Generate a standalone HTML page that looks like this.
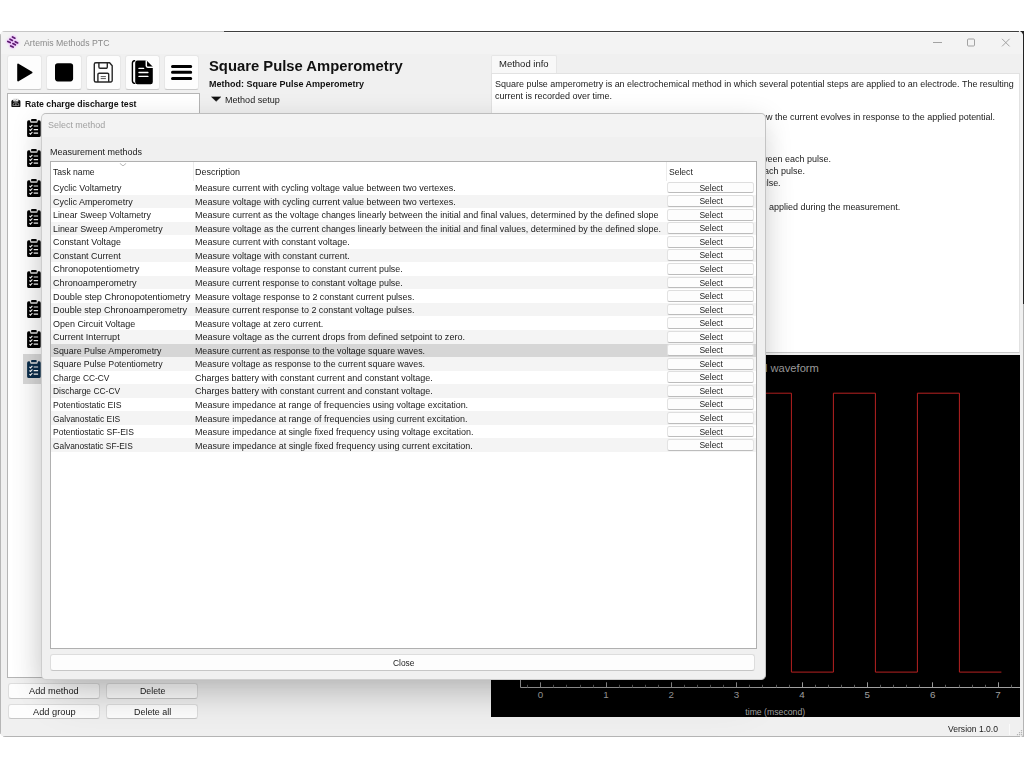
<!DOCTYPE html>
<html lang="en">
<head>
<meta charset="utf-8">
<title>Artemis Methods PTC</title>
<style>
html,body{margin:0;padding:0;}
body{width:1024px;height:768px;overflow:hidden;background:#fff;position:relative;
 font-family:"Liberation Sans",sans-serif;font-size:9.5px;color:#1a1a1a;}
.abs{position:absolute;}
.t{position:absolute;white-space:nowrap;line-height:12px;transform-origin:0 50%;}
#win{position:absolute;left:0;top:31px;width:1022.6px;height:706px;background:#f0f0f0;border-radius:5px 5px 3px 5px;overflow:hidden;}
#corner{position:absolute;left:1010px;top:31px;width:14px;height:273px;background:#222;}
#corner2{position:absolute;left:1010px;top:304px;width:13.6px;height:433px;background:#b4b4b4;}
.edge{position:absolute;pointer-events:none;}
/* all children of #win positioned in page coords via inner offset */
#in{position:absolute;left:0;top:-31px;width:1024px;height:768px;}
.tb{position:absolute;top:55.2px;width:35.4px;height:34.6px;background:#fdfdfd;border:1px solid #e7e7e7;border-bottom-color:#cacaca;border-radius:3px;box-sizing:border-box;}
.btn{position:absolute;background:#fdfdfd;border:1px solid #dddddd;border-bottom-color:#c6c6c6;border-radius:3px;box-sizing:border-box;text-align:center;}
#tree{position:absolute;left:6.8px;top:93.4px;width:193px;height:584.4px;background:#fff;border:1px solid #b5b5b5;box-sizing:border-box;}
.ci{position:absolute;left:27.1px;width:14px;height:18px;}
#dlg{position:absolute;left:41.4px;top:113.3px;width:724.4px;height:566.8px;background:#f0f0f0;border:1px solid #cdcdcd;border-top-color:#bdbdbd;border-right-color:#c4c4c4;border-radius:5px;box-sizing:border-box;
 box-shadow:-2px 8px 28px rgba(0,0,0,.17),0 28px 44px -14px rgba(0,0,0,.12);}
#tbl{position:absolute;left:50px;top:161px;width:707px;height:488px;background:#fff;border:1px solid #b0b0b0;box-sizing:border-box;overflow:hidden;}
.row{position:absolute;left:0;width:705px;height:13.55px;}
.row.alt{background:#f4f4f4;}
.row.sel{background:#d6d6d6;}
.row span{position:absolute;top:0.2px;line-height:13.55px;white-space:nowrap;transform-origin:0 50%;transform:scaleX(.945);}
.row .c1{left:1.5px;}
.row .hd{top:0.4px;}
.row .c1.hd{left:1.9px;transform:scaleX(.905);}
.row .c2{left:144.2px;}
.row .sb{position:absolute;left:616.3px;top:0.7px;width:87.2px;height:11.8px;background:#fdfdfd;border:1px solid #e3e3e3;border-top-color:#dedede;border-bottom-color:#bcbcbc;border-radius:2.5px;box-sizing:border-box;text-align:center;line-height:9.3px;}
.row .sb b{display:inline-block;font-weight:normal;transform:scaleX(.89);}
#info{position:absolute;left:491px;top:73px;width:528.5px;height:279.5px;background:#fff;border:1px solid #e2e2e2;border-bottom-color:#c8c8c8;box-sizing:border-box;}
#plot{position:absolute;left:491px;top:355px;width:529px;height:362.2px;background:#000;}
</style>
</head>
<body>
<div id="corner"></div><div id="corner2"></div>
<div id="win"><div id="in">
<div class="abs" style="left:0;top:31px;width:1024px;height:23.4px;background:#f3f3f3;"></div>

<!-- title bar -->
<svg class="abs" style="left:2px;top:32px;filter:drop-shadow(0 0 1px #e9a8ff) drop-shadow(0 0 1px #f0c4ff)" width="24" height="20" viewBox="0 0 24 20"><path d="M10.5 4.99L12.9 6.21 M8 7.19L10.4 8.41 M5.8 9.39L8.2 10.61 M13.25 9.69L15.65 10.91 M10.9 11.59L13.3 12.81 M8.7 13.89L11.1 15.11" stroke="#5b1b6e" stroke-width="1.7" stroke-linecap="round" fill="none"/></svg>
<div class="t" id="ttl" style="left:23.6px;top:36.8px;transform:scaleX(0.920);color:#8a8a8a;">Artemis Methods PTC</div>
<svg class="abs" style="left:928px;top:34px" width="90" height="18" viewBox="0 0 90 18" fill="none" stroke="#999" stroke-width=".9">
 <path d="M5 8.5h9"/><rect x="39.5" y="5" width="7" height="7" rx="1"/><path d="M74 4.8l7.6 7.6M81.6 4.8l-7.6 7.6"/>
</svg>

<!-- toolbar -->
<div class="tb" style="left:6.9px"></div>
<div class="tb" style="left:46.2px"></div>
<div class="tb" style="left:85.5px"></div>
<div class="tb" style="left:124.8px"></div>
<div class="tb" style="left:164.1px"></div>
<svg class="abs" style="left:8px;top:55px" width="190" height="34" viewBox="0 0 190 34">
 <path d="M10.1 9.4L23.6 17.45L10.1 25.5Z" fill="#000" stroke="#000" stroke-width="1.8" stroke-linejoin="round"/>
 <rect x="47" y="8.2" width="18.1" height="18.2" rx="2.8" fill="#000"/>
 <g fill="none" stroke="#262626" stroke-width="1.4" stroke-linejoin="round">
  <path d="M87.8 7.8h13.8l2.6 2.9v14.8a1.5 1.5 0 0 1-1.5 1.5h-14.9a1.5 1.5 0 0 1-1.5-1.5v-16.2a1.5 1.5 0 0 1 1.5-1.5z"/>
  <path d="M90.9 7.8v4.3a1.2 1.2 0 0 0 1.2 1.2h6a1.2 1.2 0 0 0 1.2-1.2v-4.3"/>
  <path d="M89.9 27v-7.6a1.2 1.2 0 0 1 1.2-1.2h8.4a1.2 1.2 0 0 1 1.2 1.2v7.6"/>
  <path d="M92.7 21.6h5.2M92.7 23.6h5.2" stroke-width="1" stroke="#555"/>
 </g>
 <path d="M126.6 5.7q-2.2 0.3-2.2 2.6v17.5q0 2.3 2.2 2.6" fill="none" stroke="#000" stroke-width="1.4" stroke-linecap="round"/>
 <path d="M129.4 5.6h9.2l6.2 6.2v15.2a2.2 2.2 0 0 1-2.2 2.2h-13.2a2.2 2.2 0 0 1-2.2-2.2v-19.2a2.2 2.2 0 0 1 2.2-2.2z" fill="#000"/>
 <path d="M138.3 5.2v5.6a1.4 1.4 0 0 0 1.4 1.4h5.5" fill="none" stroke="#fff" stroke-width="1.5"/>
 <path d="M131 13.4h4.6M131 17.5h8.9M131 21.4h8.9" stroke="#fff" stroke-width="1.4" stroke-linecap="round"/>
 <path d="M164.5 11.4h18.2M164.5 17.3h18.2M164.5 23.4h18.2" stroke="#000" stroke-width="3" stroke-linecap="round"/>
</svg>

<!-- headings -->
<div class="t" id="h1" style="left:209.2px;top:56.7px;transform:scaleX(1.008);font-size:14.7px;line-height:18px;font-weight:bold;color:#111;">Square Pulse Amperometry</div>
<div class="t" id="h2" style="left:209.3px;top:77.7px;transform:scaleX(0.946);font-weight:bold;color:#111;">Method: Square Pulse Amperometry</div>
<svg class="abs" style="left:210.5px;top:96.4px" width="11" height="7" viewBox="0 0 11 7"><path d="M0.6 0.9h9.1l-4.55 4.4z" fill="#111" stroke="#111" stroke-width=".6" stroke-linejoin="round"/></svg>
<div class="t" id="h3" style="left:225.3px;top:93.9px;transform:scaleX(0.952);">Method setup</div>

<!-- tree -->
<div id="tree"></div>

<svg class="abs" style="left:11.3px;top:98.2px" width="9.9" height="9.5" viewBox="0 0 105 100">
 <path d="M4 36q0-10 8-12l14-8v8h52v-8l14 8q8 2 8 12v52a8 8 0 0 1-8 8h-80a8 8 0 0 1-8-8z" fill="#0a0a0a"/>
 <path d="M24 6h54v30h-54z" fill="#e6e6e6"/>
 <path d="M38 22l8 6 16-18" fill="none" stroke="#8a8a8a" stroke-width="7"/>
 <path d="M20 80v-6a32 26 0 0 1 64 0v6z" fill="none" stroke="#b4b4b4" stroke-width="7"/>
 <path d="M52 80v-24" stroke="#c8c8c8" stroke-width="9"/>
</svg>
<div class="t" id="grp" style="left:25.3px;top:98.0px;transform:scaleX(0.918);font-weight:bold;color:#111;">Rate charge discharge test</div>
<div class="abs" style="left:23px;top:354.2px;width:24px;height:29.5px;background:#d9d9d9;"></div>
<svg class="ci" style="top:118.55px" viewBox="0 0 14 18" fill="#000"><path d="M1.7 1.3h2.2a1.5 1.3 0 0 1 1.5-1.3h3a1.5 1.3 0 0 1 1.5 1.3h2.2a1.6 1.6 0 0 1 1.6 1.6v13.5a1.6 1.6 0 0 1-1.6 1.6h-10.4a1.6 1.6 0 0 1-1.6-1.6v-13.5a1.6 1.6 0 0 1 1.6-1.6z"/><path d="M2.6 1.1h1.5v1.2h5.6v-1.2h1.5l-1 2.6h-6.6z" fill="#e4e4e4"/><path d="M2.5 6.9l1 1 1.9-2.1M2.5 10.5l1 1 1.9-2.1M2.5 14.1l1 1 1.9-2.1" fill="none" stroke="#fff" stroke-width="1.1"/><path d="M6.7 7h4.4M6.7 10.6h4.4M6.7 14.2h4.4" stroke="#fff" stroke-width="1.2"/></svg>
<svg class="ci" style="top:148.75px" viewBox="0 0 14 18" fill="#000"><path d="M1.7 1.3h2.2a1.5 1.3 0 0 1 1.5-1.3h3a1.5 1.3 0 0 1 1.5 1.3h2.2a1.6 1.6 0 0 1 1.6 1.6v13.5a1.6 1.6 0 0 1-1.6 1.6h-10.4a1.6 1.6 0 0 1-1.6-1.6v-13.5a1.6 1.6 0 0 1 1.6-1.6z"/><path d="M2.6 1.1h1.5v1.2h5.6v-1.2h1.5l-1 2.6h-6.6z" fill="#e4e4e4"/><path d="M2.5 6.9l1 1 1.9-2.1M2.5 10.5l1 1 1.9-2.1M2.5 14.1l1 1 1.9-2.1" fill="none" stroke="#fff" stroke-width="1.1"/><path d="M6.7 7h4.4M6.7 10.6h4.4M6.7 14.2h4.4" stroke="#fff" stroke-width="1.2"/></svg>
<svg class="ci" style="top:179.05px" viewBox="0 0 14 18" fill="#000"><path d="M1.7 1.3h2.2a1.5 1.3 0 0 1 1.5-1.3h3a1.5 1.3 0 0 1 1.5 1.3h2.2a1.6 1.6 0 0 1 1.6 1.6v13.5a1.6 1.6 0 0 1-1.6 1.6h-10.4a1.6 1.6 0 0 1-1.6-1.6v-13.5a1.6 1.6 0 0 1 1.6-1.6z"/><path d="M2.6 1.1h1.5v1.2h5.6v-1.2h1.5l-1 2.6h-6.6z" fill="#e4e4e4"/><path d="M2.5 6.9l1 1 1.9-2.1M2.5 10.5l1 1 1.9-2.1M2.5 14.1l1 1 1.9-2.1" fill="none" stroke="#fff" stroke-width="1.1"/><path d="M6.7 7h4.4M6.7 10.6h4.4M6.7 14.2h4.4" stroke="#fff" stroke-width="1.2"/></svg>
<svg class="ci" style="top:209.15px" viewBox="0 0 14 18" fill="#000"><path d="M1.7 1.3h2.2a1.5 1.3 0 0 1 1.5-1.3h3a1.5 1.3 0 0 1 1.5 1.3h2.2a1.6 1.6 0 0 1 1.6 1.6v13.5a1.6 1.6 0 0 1-1.6 1.6h-10.4a1.6 1.6 0 0 1-1.6-1.6v-13.5a1.6 1.6 0 0 1 1.6-1.6z"/><path d="M2.6 1.1h1.5v1.2h5.6v-1.2h1.5l-1 2.6h-6.6z" fill="#e4e4e4"/><path d="M2.5 6.9l1 1 1.9-2.1M2.5 10.5l1 1 1.9-2.1M2.5 14.1l1 1 1.9-2.1" fill="none" stroke="#fff" stroke-width="1.1"/><path d="M6.7 7h4.4M6.7 10.6h4.4M6.7 14.2h4.4" stroke="#fff" stroke-width="1.2"/></svg>
<svg class="ci" style="top:239.45px" viewBox="0 0 14 18" fill="#000"><path d="M1.7 1.3h2.2a1.5 1.3 0 0 1 1.5-1.3h3a1.5 1.3 0 0 1 1.5 1.3h2.2a1.6 1.6 0 0 1 1.6 1.6v13.5a1.6 1.6 0 0 1-1.6 1.6h-10.4a1.6 1.6 0 0 1-1.6-1.6v-13.5a1.6 1.6 0 0 1 1.6-1.6z"/><path d="M2.6 1.1h1.5v1.2h5.6v-1.2h1.5l-1 2.6h-6.6z" fill="#e4e4e4"/><path d="M2.5 6.9l1 1 1.9-2.1M2.5 10.5l1 1 1.9-2.1M2.5 14.1l1 1 1.9-2.1" fill="none" stroke="#fff" stroke-width="1.1"/><path d="M6.7 7h4.4M6.7 10.6h4.4M6.7 14.2h4.4" stroke="#fff" stroke-width="1.2"/></svg>
<svg class="ci" style="top:269.55px" viewBox="0 0 14 18" fill="#000"><path d="M1.7 1.3h2.2a1.5 1.3 0 0 1 1.5-1.3h3a1.5 1.3 0 0 1 1.5 1.3h2.2a1.6 1.6 0 0 1 1.6 1.6v13.5a1.6 1.6 0 0 1-1.6 1.6h-10.4a1.6 1.6 0 0 1-1.6-1.6v-13.5a1.6 1.6 0 0 1 1.6-1.6z"/><path d="M2.6 1.1h1.5v1.2h5.6v-1.2h1.5l-1 2.6h-6.6z" fill="#e4e4e4"/><path d="M2.5 6.9l1 1 1.9-2.1M2.5 10.5l1 1 1.9-2.1M2.5 14.1l1 1 1.9-2.1" fill="none" stroke="#fff" stroke-width="1.1"/><path d="M6.7 7h4.4M6.7 10.6h4.4M6.7 14.2h4.4" stroke="#fff" stroke-width="1.2"/></svg>
<svg class="ci" style="top:299.75px" viewBox="0 0 14 18" fill="#000"><path d="M1.7 1.3h2.2a1.5 1.3 0 0 1 1.5-1.3h3a1.5 1.3 0 0 1 1.5 1.3h2.2a1.6 1.6 0 0 1 1.6 1.6v13.5a1.6 1.6 0 0 1-1.6 1.6h-10.4a1.6 1.6 0 0 1-1.6-1.6v-13.5a1.6 1.6 0 0 1 1.6-1.6z"/><path d="M2.6 1.1h1.5v1.2h5.6v-1.2h1.5l-1 2.6h-6.6z" fill="#e4e4e4"/><path d="M2.5 6.9l1 1 1.9-2.1M2.5 10.5l1 1 1.9-2.1M2.5 14.1l1 1 1.9-2.1" fill="none" stroke="#fff" stroke-width="1.1"/><path d="M6.7 7h4.4M6.7 10.6h4.4M6.7 14.2h4.4" stroke="#fff" stroke-width="1.2"/></svg>
<svg class="ci" style="top:329.95px" viewBox="0 0 14 18" fill="#000"><path d="M1.7 1.3h2.2a1.5 1.3 0 0 1 1.5-1.3h3a1.5 1.3 0 0 1 1.5 1.3h2.2a1.6 1.6 0 0 1 1.6 1.6v13.5a1.6 1.6 0 0 1-1.6 1.6h-10.4a1.6 1.6 0 0 1-1.6-1.6v-13.5a1.6 1.6 0 0 1 1.6-1.6z"/><path d="M2.6 1.1h1.5v1.2h5.6v-1.2h1.5l-1 2.6h-6.6z" fill="#e4e4e4"/><path d="M2.5 6.9l1 1 1.9-2.1M2.5 10.5l1 1 1.9-2.1M2.5 14.1l1 1 1.9-2.1" fill="none" stroke="#fff" stroke-width="1.1"/><path d="M6.7 7h4.4M6.7 10.6h4.4M6.7 14.2h4.4" stroke="#fff" stroke-width="1.2"/></svg>
<svg class="ci" style="top:360.25px" viewBox="0 0 14 18" fill="#0b2d4b"><path d="M1.7 1.3h2.2a1.5 1.3 0 0 1 1.5-1.3h3a1.5 1.3 0 0 1 1.5 1.3h2.2a1.6 1.6 0 0 1 1.6 1.6v13.5a1.6 1.6 0 0 1-1.6 1.6h-10.4a1.6 1.6 0 0 1-1.6-1.6v-13.5a1.6 1.6 0 0 1 1.6-1.6z"/><path d="M2.6 1.1h1.5v1.2h5.6v-1.2h1.5l-1 2.6h-6.6z" fill="#e4e4e4"/><path d="M2.5 6.9l1 1 1.9-2.1M2.5 10.5l1 1 1.9-2.1M2.5 14.1l1 1 1.9-2.1" fill="none" stroke="#fff" stroke-width="1.1"/><path d="M6.7 7h4.4M6.7 10.6h4.4M6.7 14.2h4.4" stroke="#fff" stroke-width="1.2"/></svg>

<!-- right panel -->
<div class="abs" style="left:490.7px;top:55.1px;width:66.8px;height:19px;background:#f8f8f8;border:1px solid #e6e6e6;border-bottom:none;box-sizing:border-box;border-radius:2px 2px 0 0;"></div>
<div id="info"></div>

<div class="t" id="tab" style="left:498.9px;top:57.7px;transform:scaleX(0.999);">Method info</div>
<div class="t" id="i1" style="left:495.3px;top:77.6px;transform:scaleX(0.944);">Square pulse amperometry is an electrochemical method in which several potential steps are applied to an electrode. The resulting</div>
<div class="t" id="i2" style="left:495.3px;top:89.5px;transform:scaleX(0.946);">current is recorded over time.</div>
<div class="t" id="i3" style="left:519.2px;top:111.2px;transform:scaleX(0.945);">The pulse period is divided into sub-intervals, thus showing how the current evolves in response to the applied potential.</div>
<div class="t" id="i4" style="left:523.3px;top:153.0px;transform:scaleX(0.945);">Pulse 1 duration: the time span of the first potential level between each pulse.</div>
<div class="t" id="i5" style="left:550.9px;top:165.0px;transform:scaleX(0.945);">Pulse 1 potential: the potential that is applied during each pulse.</div>
<div class="t" id="i6" style="left:573.9px;top:176.9px;transform:scaleX(0.945);">Pulse 2 duration: the time span of the second pulse.</div>
<div class="t" id="i7" style="left:536.7px;top:200.5px;transform:scaleX(0.945);">Number of cycles: the number of square wave repetitions &nbsp;applied during the measurement.</div>

<div id="plot"></div>
<svg class="abs" style="left:491px;top:355px" width="529" height="362" viewBox="0 0 529 362" font-family="Liberation Sans, sans-serif">
 <text x="327.9" y="16.8" font-size="11.5" fill="#9a9a9a" text-anchor="end" textLength="95" lengthAdjust="spacingAndGlyphs">Potential waveform</text>
 <path d="M29.5 322V332.5H529" fill="none" stroke="#a0a0a0" stroke-width="1"/>
 <path d="M36.5 329.8V332.5M62.5 329.8V332.5M75.5 329.8V332.5M89.5 329.8V332.5M102.5 329.8V332.5M128.5 329.8V332.5M141.5 329.8V332.5M154.5 329.8V332.5M167.5 329.8V332.5M193.5 329.8V332.5M206.5 329.8V332.5M219.5 329.8V332.5M232.5 329.8V332.5M258.5 329.8V332.5M271.5 329.8V332.5M285.5 329.8V332.5M298.5 329.8V332.5M324.5 329.8V332.5M337.5 329.8V332.5M350.5 329.8V332.5M363.5 329.8V332.5M389.5 329.8V332.5M402.5 329.8V332.5M415.5 329.8V332.5M428.5 329.8V332.5M454.5 329.8V332.5M468.5 329.8V332.5M481.5 329.8V332.5M494.5 329.8V332.5M520.5 329.8V332.5" stroke="#5c5c5c" stroke-width="1" fill="none"/>
 <path d="M49.5 327.3V332.5M115.5 327.3V332.5M180.5 327.3V332.5M245.5 327.3V332.5M311.5 327.3V332.5M376.5 327.3V332.5M441.5 327.3V332.5M507.5 327.3V332.5" stroke="#9a9a9a" stroke-width="1" fill="none"/>
 <g font-size="9.8" fill="#a0a0a0"><text x="49.6" y="343.3" text-anchor="middle">0</text><text x="114.9" y="343.3" text-anchor="middle">1</text><text x="180.3" y="343.3" text-anchor="middle">2</text><text x="245.6" y="343.3" text-anchor="middle">3</text><text x="311.0" y="343.3" text-anchor="middle">4</text><text x="376.3" y="343.3" text-anchor="middle">5</text><text x="441.7" y="343.3" text-anchor="middle">6</text><text x="507.0" y="343.3" text-anchor="middle">7</text><text x="314.1" y="359.8" text-anchor="end" textLength="59.8" lengthAdjust="spacingAndGlyphs" font-size="9.3">time (msecond)</text></g>
 <path d="M174.4 38.2H216.4V317.1H258.4V38.2H300.4V317.1H342.4V38.2H384.4V317.1H426.4V38.2H468.4V317.1H510.4" fill="none" stroke="#b82222" stroke-width="1"/>
</svg>

<!-- bottom buttons -->
<div class="btn" style="left:7.6px;top:682.8px;width:92.8px;height:15.8px;"></div>
<div class="btn" style="left:105.6px;top:682.8px;width:92.8px;height:15.8px;"></div>
<div class="btn" style="left:7.6px;top:703.7px;width:92.8px;height:15.8px;"></div>
<div class="btn" style="left:105.6px;top:703.7px;width:92.8px;height:15.8px;"></div>
<div class="t" id="b1" style="left:29.3px;top:684.8px;transform:scaleX(0.970);">Add method</div>
<div class="t" id="b2" style="left:139.6px;top:684.8px;transform:scaleX(0.925);">Delete</div>
<div class="t" id="b3" style="left:33.0px;top:705.6px;transform:scaleX(0.974);">Add group</div>
<div class="t" id="b4" style="left:133.6px;top:705.6px;transform:scaleX(0.939);">Delete all</div>
<div class="t" id="ver" style="left:948.2px;top:723.0px;transform:scaleX(0.901);">Version 1.0.0</div>

<div class="abs" style="left:1009px;top:724px;width:1px;height:11px;background:#fafafa;"></div>
<svg class="abs" style="left:1016px;top:729px" width="7" height="7" viewBox="0 0 7 7"><path d="M5.5 1.5v.1M5.5 3.5v.1M3.5 3.5v.1M5.5 5.5v.1M3.5 5.5v.1M1.5 5.5v.1" stroke="#b5b5b5" stroke-width="1.2" stroke-linecap="square"/></svg>
<!-- dialog -->
<div id="dlg"><div style="position:absolute;left:0;top:0;width:100%;height:22.5px;background:#f3f3f3;border-radius:5px 5px 0 0;"></div></div>
<div class="t" id="d1" style="left:47.8px;top:119.0px;transform:scaleX(0.942);color:#a0a0a0;">Select method</div>
<div class="t" id="d2" style="left:50.1px;top:145.9px;transform:scaleX(0.946);">Measurement methods</div>
<div id="tbl">
<div class="abs" style="left:141.5px;top:0;width:1px;height:19px;background:#ececec"></div><div class="abs" style="left:614.5px;top:0;width:1px;height:19px;background:#ececec"></div>
<svg class="abs" style="left:68.3px;top:1px" width="8" height="4" viewBox="0 0 8 4"><path d="M0.8 0.3l3.2 2.6 3.2-2.6" fill="none" stroke="#a6a6a6" stroke-width=".8"/></svg>
<div class="row" style="top:3px;height:14px"><span class="c1 hd">Task name</span><span class="c2 hd">Description</span><span class="hd" style="left:618.3px;transform:scaleX(.9)">Select</span></div>
<div class="row" style="top:19.00px"><span class="c1" style="transform:scaleX(0.939)">Cyclic Voltametry</span><span class="c2" style="transform:scaleX(0.944)">Measure current with cycling voltage value between two vertexes.</span><div class="sb"><b>Select</b></div></div>
<div class="row alt" style="top:32.55px"><span class="c1" style="transform:scaleX(0.944)">Cyclic Amperometry</span><span class="c2" style="transform:scaleX(0.944)">Measure voltage with cycling current value between two vertexes.</span><div class="sb"><b>Select</b></div></div>
<div class="row" style="top:46.10px"><span class="c1" style="transform:scaleX(0.927)">Linear Sweep Voltametry</span><span class="c2" style="transform:scaleX(0.946)">Measure current as the voltage changes linearly between the initial and final values, determined by the defined slope</span><div class="sb"><b>Select</b></div></div>
<div class="row alt" style="top:59.65px"><span class="c1" style="transform:scaleX(0.936)">Linear Sweep Amperometry</span><span class="c2" style="transform:scaleX(0.946)">Measure voltage as the current changes linearly between the initial and final values, determined by the defined slope.</span><div class="sb"><b>Select</b></div></div>
<div class="row" style="top:73.20px"><span class="c1" style="transform:scaleX(0.939)">Constant Voltage</span><span class="c2" style="transform:scaleX(0.948)">Measure current with constant voltage.</span><div class="sb"><b>Select</b></div></div>
<div class="row alt" style="top:86.75px"><span class="c1" style="transform:scaleX(0.936)">Constant Current</span><span class="c2" style="transform:scaleX(0.948)">Measure voltage with constant current.</span><div class="sb"><b>Select</b></div></div>
<div class="row" style="top:100.30px"><span class="c1" style="transform:scaleX(0.974)">Chronopotentiometry</span><span class="c2" style="transform:scaleX(0.939)">Measure voltage response to constant current pulse.</span><div class="sb"><b>Select</b></div></div>
<div class="row alt" style="top:113.85px"><span class="c1" style="transform:scaleX(0.958)">Chronoamperometry</span><span class="c2" style="transform:scaleX(0.939)">Measure current response to constant voltage pulse.</span><div class="sb"><b>Select</b></div></div>
<div class="row" style="top:127.40px"><span class="c1" style="transform:scaleX(0.966)">Double step Chronopotentiometry</span><span class="c2" style="transform:scaleX(0.938)">Measure voltage response to 2 constant current pulses.</span><div class="sb"><b>Select</b></div></div>
<div class="row alt" style="top:140.95px"><span class="c1" style="transform:scaleX(0.954)">Double step Chronoamperometry</span><span class="c2" style="transform:scaleX(0.938)">Measure current response to 2 constant voltage pulses.</span><div class="sb"><b>Select</b></div></div>
<div class="row" style="top:154.50px"><span class="c1" style="transform:scaleX(0.943)">Open Circuit Voltage</span><span class="c2" style="transform:scaleX(0.937)">Measure voltage at zero current.</span><div class="sb"><b>Select</b></div></div>
<div class="row alt" style="top:168.05px"><span class="c1" style="transform:scaleX(0.957)">Current Interrupt</span><span class="c2" style="transform:scaleX(0.954)">Measure voltage as the current drops from defined setpoint to zero.</span><div class="sb"><b>Select</b></div></div>
<div class="row sel" style="top:181.60px"><span class="c1" style="transform:scaleX(0.934)">Square Pulse Amperometry</span><span class="c2" style="transform:scaleX(0.931)">Measure current as response to the voltage square waves.</span><div class="sb"><b>Select</b></div></div>
<div class="row alt" style="top:195.15px"><span class="c1" style="transform:scaleX(0.927)">Square Pulse Potentiometry</span><span class="c2" style="transform:scaleX(0.931)">Measure voltage as response to the current square waves.</span><div class="sb"><b>Select</b></div></div>
<div class="row" style="top:208.70px"><span class="c1" style="transform:scaleX(0.884)">Charge CC-CV</span><span class="c2" style="transform:scaleX(0.948)">Charges battery with constant current and constant voltage.</span><div class="sb"><b>Select</b></div></div>
<div class="row alt" style="top:222.25px"><span class="c1" style="transform:scaleX(0.890)">Discharge CC-CV</span><span class="c2" style="transform:scaleX(0.948)">Charges battery with constant current and constant voltage.</span><div class="sb"><b>Select</b></div></div>
<div class="row" style="top:235.80px"><span class="c1" style="transform:scaleX(0.913)">Potentiostatic EIS</span><span class="c2" style="transform:scaleX(0.942)">Measure impedance at range of frequencies using voltage excitation.</span><div class="sb"><b>Select</b></div></div>
<div class="row alt" style="top:249.35px"><span class="c1" style="transform:scaleX(0.890)">Galvanostatic EIS</span><span class="c2" style="transform:scaleX(0.943)">Measure impedance at range of frequencies using current excitation.</span><div class="sb"><b>Select</b></div></div>
<div class="row" style="top:262.90px"><span class="c1" style="transform:scaleX(0.896)">Potentiostatic SF-EIS</span><span class="c2" style="transform:scaleX(0.943)">Measure impedance at single fixed frequency using voltage excitation.</span><div class="sb"><b>Select</b></div></div>
<div class="row alt" style="top:276.45px"><span class="c1" style="transform:scaleX(0.878)">Galvanostatic SF-EIS</span><span class="c2" style="transform:scaleX(0.944)">Measure impedance at single fixed frequency using current excitation.</span><div class="sb"><b>Select</b></div></div>
</div>
<div class="btn" style="left:50.4px;top:654.4px;width:705px;height:16.4px;"></div>
<div class="t" id="cl" style="left:392.5px;top:656.9px;transform:scaleX(0.885);">Close</div>

<div class="edge" style="left:0;top:31px;width:224px;height:1px;background:#c6c6c6;"></div>
<div class="edge" style="left:224px;top:31px;width:795px;height:1px;background:#3e3e3e;"></div>
<div class="edge" style="left:224px;top:32px;width:793px;height:1px;background:#fafafa;"></div>
<div class="edge" style="left:0;top:34px;width:1px;height:700px;background:#b6b6b6;"></div>
<div class="edge" style="left:3px;top:736px;width:1017px;height:1px;background:#b4b4b4;"></div>
</div></div>
</body>
</html>
